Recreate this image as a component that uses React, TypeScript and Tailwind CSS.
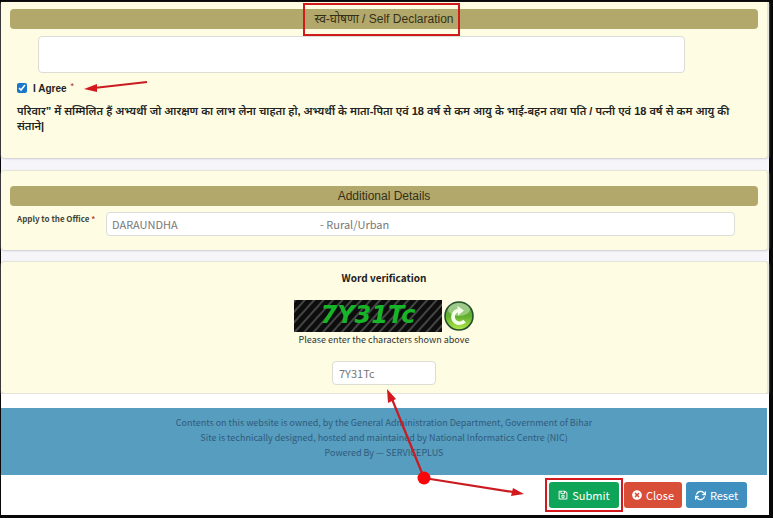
import { FaRegSave, FaTimesCircle } from "react-icons/fa";
import { FiRefreshCw } from "react-icons/fi";

type SectionTitleProps = {
  children: React.ReactNode;
  highlighted?: boolean;
};

const SectionTitle = ({ children, highlighted }: SectionTitleProps) => {
  return (
    <h2 className="mx-[9px] flex h-5 items-center justify-center rounded bg-[#b3a86b] font-['Liberation_Sans','Noto_Sans',sans-serif] text-[12px] text-[#333018]">
      <span className="relative">
        {children}
        {highlighted && (
          <span className="absolute -top-[7px] -right-[7px] -bottom-2 -left-3 border-2 border-[#d01a1c]" />
        )}
      </span>
    </h2>
  );
};

const Captcha = () => {
  return (
    <div className="relative flex h-8 w-[148px] items-center justify-center overflow-hidden bg-[#111]">
      <svg className="absolute inset-0 h-full w-full" aria-hidden="true">
        <defs>
          <pattern id="stripes" width="7" height="7" patternUnits="userSpaceOnUse" patternTransform="rotate(42)">
            <rect width="7" height="7" fill="#0d0d0d" />
            <rect width="2" height="7" fill="#454545" />
          </pattern>
        </defs>
        <rect width="100%" height="100%" fill="url(#stripes)" />
      </svg>
      <span className="relative pb-0.5 font-['DejaVu_Sans',sans-serif] text-[24px] leading-6 font-bold text-[#16b527] italic">
        7Y31Tc
      </span>
    </div>
  );
};

const RefreshButton = () => {
  return (
    <button type="button" aria-label="Refresh captcha" className="h-[30px] w-[30px]">
      <svg viewBox="0 0 30 30" className="h-full w-full">
        <defs>
          <linearGradient id="ball" x1="0" y1="0" x2="0" y2="1">
            <stop offset="0" stopColor="#6fae58" />
            <stop offset="0.5" stopColor="#5fae2c" />
            <stop offset="1" stopColor="#b4ea4c" />
          </linearGradient>
        </defs>
        <circle cx="15" cy="15" r="14" fill="url(#ball)" stroke="#23502a" strokeWidth="1.6" />
        <ellipse cx="15" cy="8.500" rx="11" ry="6.500" fill="#fff" opacity="0.35" />
        <path d="M14 9.500 A6.500 6.500 0 1 0 20.500 20" fill="none" stroke="#f4ffe9" strokeWidth="3.600" />
        <path d="M13.500 5 L20 9.500 L14 14.500 Z" fill="#f4ffe9" />
      </svg>
    </button>
  );
};

// Red pointers drawn over the form
const Arrows = () => {
  return (
    <svg className="pointer-events-none absolute top-0 left-0 h-[518px] w-[773px]" aria-hidden="true">
      <g stroke="#c91b20" strokeWidth="2.2" fill="none">
        <path d="M147 82 L94 88" />
        <path d="M424 478 L392 399" />
        <path d="M424 478 L513 492" />
      </g>
      <g fill="#d3191d">
        <path d="M84 89 L97 84 L97 92 Z" />
        <path d="M387 389 L396 399 L388 403 Z" />
        <path d="M524 494 L511 496 L513 488 Z" />
      </g>
      <circle cx="424" cy="478" r="6.500" fill="#fb0509" />
    </svg>
  );
};

const card = "border-[#e4e4d9] bg-[#fefce2] shadow-[0_1px_2px_#c9c9d0]";
const field = "rounded border border-[#dcdcd6] bg-white text-[#777] outline-none";
const action =
  "flex h-[26px] items-center justify-center gap-1 rounded-[3px] text-[11px] text-white";

const App = () => {
  return (
    <div className="relative min-h-screen bg-[#080808] pt-0.5 pr-1 pb-[3px] pl-px font-['Noto_Sans_CJK_JP','Noto_Sans',sans-serif] text-[9px] text-[#333]">
      <form className="bg-[#f6f6fa]" onSubmit={(e) => e.preventDefault()}>
        <section className={`h-[156px] rounded-b border-r-2 pt-[7px] ${card}`}>
          <SectionTitle highlighted>स्व-घोषणा / Self Declaration</SectionTitle>
          <div className="mt-[7px] mr-[82px] ml-[37px]">
            <textarea aria-label="Self declaration" className={`block h-[37px] w-full resize-none ${field}`} />
          </div>
          <div className="mt-[7px] ml-4 flex h-4 items-center font-['Liberation_Sans',sans-serif] text-[10px] font-bold text-[#222]">
            <input id="agree" type="checkbox" defaultChecked className="mr-[6px] h-[10px] w-[10px] accent-[#1976c9]" />
            <label htmlFor="agree">I Agree</label>
            <span className="ml-1 self-start text-[9px] leading-3 font-normal text-[#a33]">*</span>
          </div>
          <p className="mt-2 mr-4 ml-4 font-['Liberation_Sans','Noto_Sans',sans-serif] text-[11px] leading-[15px] font-semibold text-[#222]">
            परिवार” में सम्मिलित हैं अभ्यर्थी जो आरक्षण का लाभ लेना चाहता हो, अभ्यर्थी के माता-पिता एवं 18 वर्ष से कम आयु के भाई-बहन तथा पति / पत्नी एवं 18 वर्ष से कम आयु की संताने|
          </p>
        </section>

        <section className={`mt-3 h-20 rounded border-t border-r-2 pt-[15px] ${card}`}>
          <SectionTitle>Additional Details</SectionTitle>
          <div className="mt-[6px] mr-8 ml-4 flex">
            <label htmlFor="office" className="w-[89px] text-[8px] leading-[14px] font-bold text-[#44443a]">
              Apply to the Office <span className="text-[#b44]">*</span>
            </label>
            <div className={`flex h-6 flex-1 items-center ${field}`}>
              <input
                id="office"
                readOnly
                defaultValue="DARAUNDHA"
                className="w-[213px] pl-[5px] text-[11px] outline-none"
              />
              <span className="text-[11px]">- Rural/Urban</span>
            </div>
          </div>
        </section>

        <section className={`mt-[11px] flex h-[133px] flex-col items-center rounded border-y border-r-2 pt-2 ${card}`}>
          <h3 className="text-[10px] leading-4 font-bold text-[#222]">Word verification</h3>
          <div className="mt-[14px] flex items-center gap-[2px]">
            <Captcha />
            <RefreshButton />
          </div>
          <label htmlFor="captcha" className="leading-4">
            Please enter the characters shown above
          </label>
          <input id="captcha" defaultValue="7Y31Tc" className={`mt-[13px] h-6 w-[104px] px-[6px] text-[11px] ${field}`} />
        </section>

        <div className="bg-white pt-[14px]">
          <footer className="mr-0.5 h-[67px] bg-[#569dbf] pt-[7px] text-center leading-[15px] text-[#315b7c]">
            <p>Contents on this website is owned, by the General Administration Department, Government of Bihar</p>
            <p>Site is technically designed, hosted and maintained by National Informatics Centre (NIC)</p>
            <p>Powered By — SERVICEPLUS</p>
          </footer>
          <div className="flex h-10 items-center justify-end pr-[22px]">
            <div className="relative mr-[5px]">
              <button type="submit" className={`w-[70px] bg-[#0fa558] ${action}`}>
                <FaRegSave size={10} /> Submit
              </button>
              <span className="pointer-events-none absolute -inset-1 border-2 border-[#d3191d]" />
            </div>
            <button type="button" className={`mr-1 w-[58px] bg-[#d94e37] ${action}`}>
              <FaTimesCircle size={10} /> Close
            </button>
            <button type="reset" className={`w-[61px] bg-[#3f8fbf] ${action}`}>
              <FiRefreshCw size={11} strokeWidth={3} /> Reset
            </button>
          </div>
        </div>
      </form>
      <Arrows />
    </div>
  );
};

export default App;
